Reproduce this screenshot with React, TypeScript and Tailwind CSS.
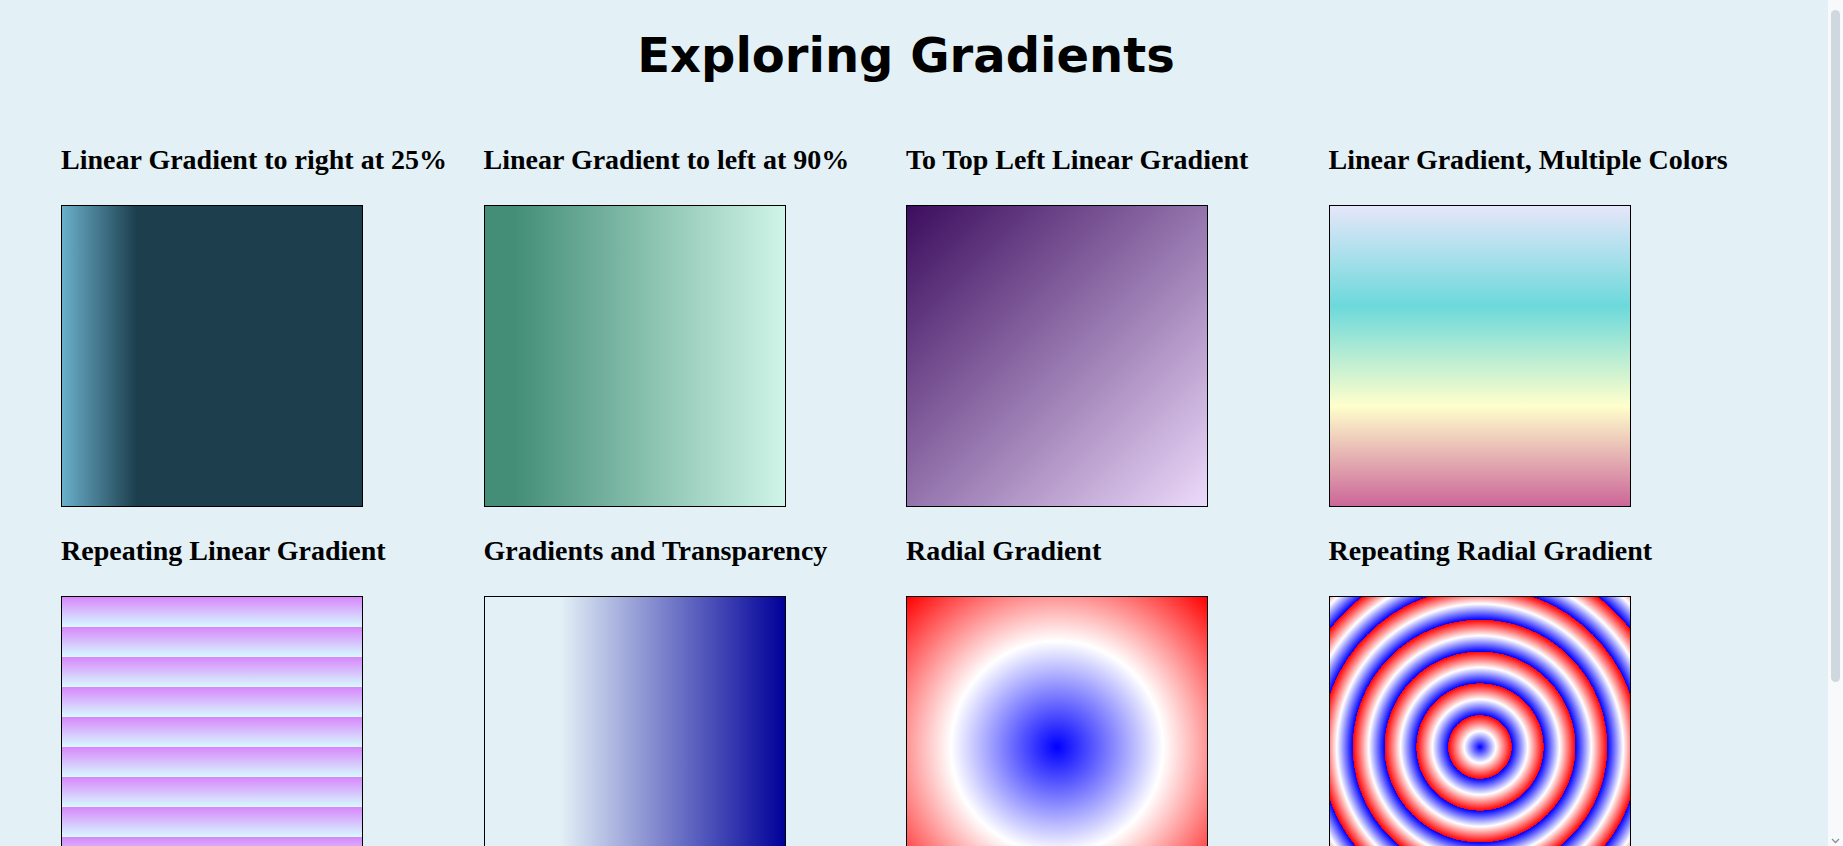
import React from 'react';

interface Swatch {
  title: string;
  bg: string;
}

// each box is 300x300 with a 1px black border
const swatches: Swatch[] = [
  {
    title: 'Linear Gradient to right at 25%',
    bg: 'bg-[linear-gradient(to_right,#6aafca,#1c3e4d_25%)]',
  },
  {
    title: 'Linear Gradient to left at 90%',
    bg: 'bg-[linear-gradient(to_left,#d0f5e8,#448e77_90%)]',
  },
  {
    title: 'To Top Left Linear Gradient',
    bg: 'bg-[linear-gradient(to_top_left,#ecdafa,#3c0d5e)]',
  },
  {
    title: 'Linear Gradient, Multiple Colors',
    bg: 'bg-[linear-gradient(#e6e6fa,#6cd9db,#ffffcc,#cc6699)]',
  },
  {
    title: 'Repeating Linear Gradient',
    bg: 'bg-[repeating-linear-gradient(#d886fa,#d6fbff_30px)]',
  },
  {
    title: 'Gradients and Transparency',
    bg: 'bg-[linear-gradient(to_right,rgba(0,0,153,0)_25%,#000099)]',
  },
  {
    title: 'Radial Gradient',
    bg: 'bg-[radial-gradient(#0000ff,#ffffff,#ff0000)]',
  },
  {
    title: 'Repeating Radial Gradient',
    bg: 'bg-[repeating-radial-gradient(#0000ff,#ffffff,#ff0000_15%)]',
  },
];

const GradientCard: React.FC<Swatch> = ({ title, bg }) => (
  <div className="flex flex-col">
    <h2 className="font-['Liberation_Serif','Times_New_Roman',serif] text-[28px] font-bold leading-[32px] text-black whitespace-nowrap mb-[29px]">
      {title}
    </h2>
    <div className={`w-[302px] h-[302px] border border-black ${bg}`} />
  </div>
);

export default function App() {
  return (
    <div className="min-h-screen bg-[#e3f0f6] pt-[26px] pb-[120px]">
      <div className="ml-[61px] w-[1690px]">
        <h1 className="font-['DejaVu_Sans','Verdana',sans-serif] text-[48px] font-bold leading-[58px] text-center text-black">
          Exploring Gradients
        </h1>

        <div className="mt-[60px] grid grid-cols-4 gap-y-[28px]">
          {swatches.map((s) => (
            <GradientCard key={s.title} title={s.title} bg={s.bg} />
          ))}
        </div>
      </div>

      {/* window scrollbar */}
      <div className="fixed top-0 right-0 w-[15px] h-screen bg-[#f7f9fa]">
        <div className="absolute top-[10px] right-[3px] w-[9px] h-[672px] rounded-full bg-[#cfd8df]" />
        <svg
          className="absolute bottom-[2px] left-[3px]"
          width="9"
          height="7"
          viewBox="0 0 9 7"
        >
          <path d="M1 2 L4.5 5.5 L8 2" fill="none" stroke="#8a8f94" strokeWidth="1.3" />
        </svg>
      </div>
    </div>
  );
}
